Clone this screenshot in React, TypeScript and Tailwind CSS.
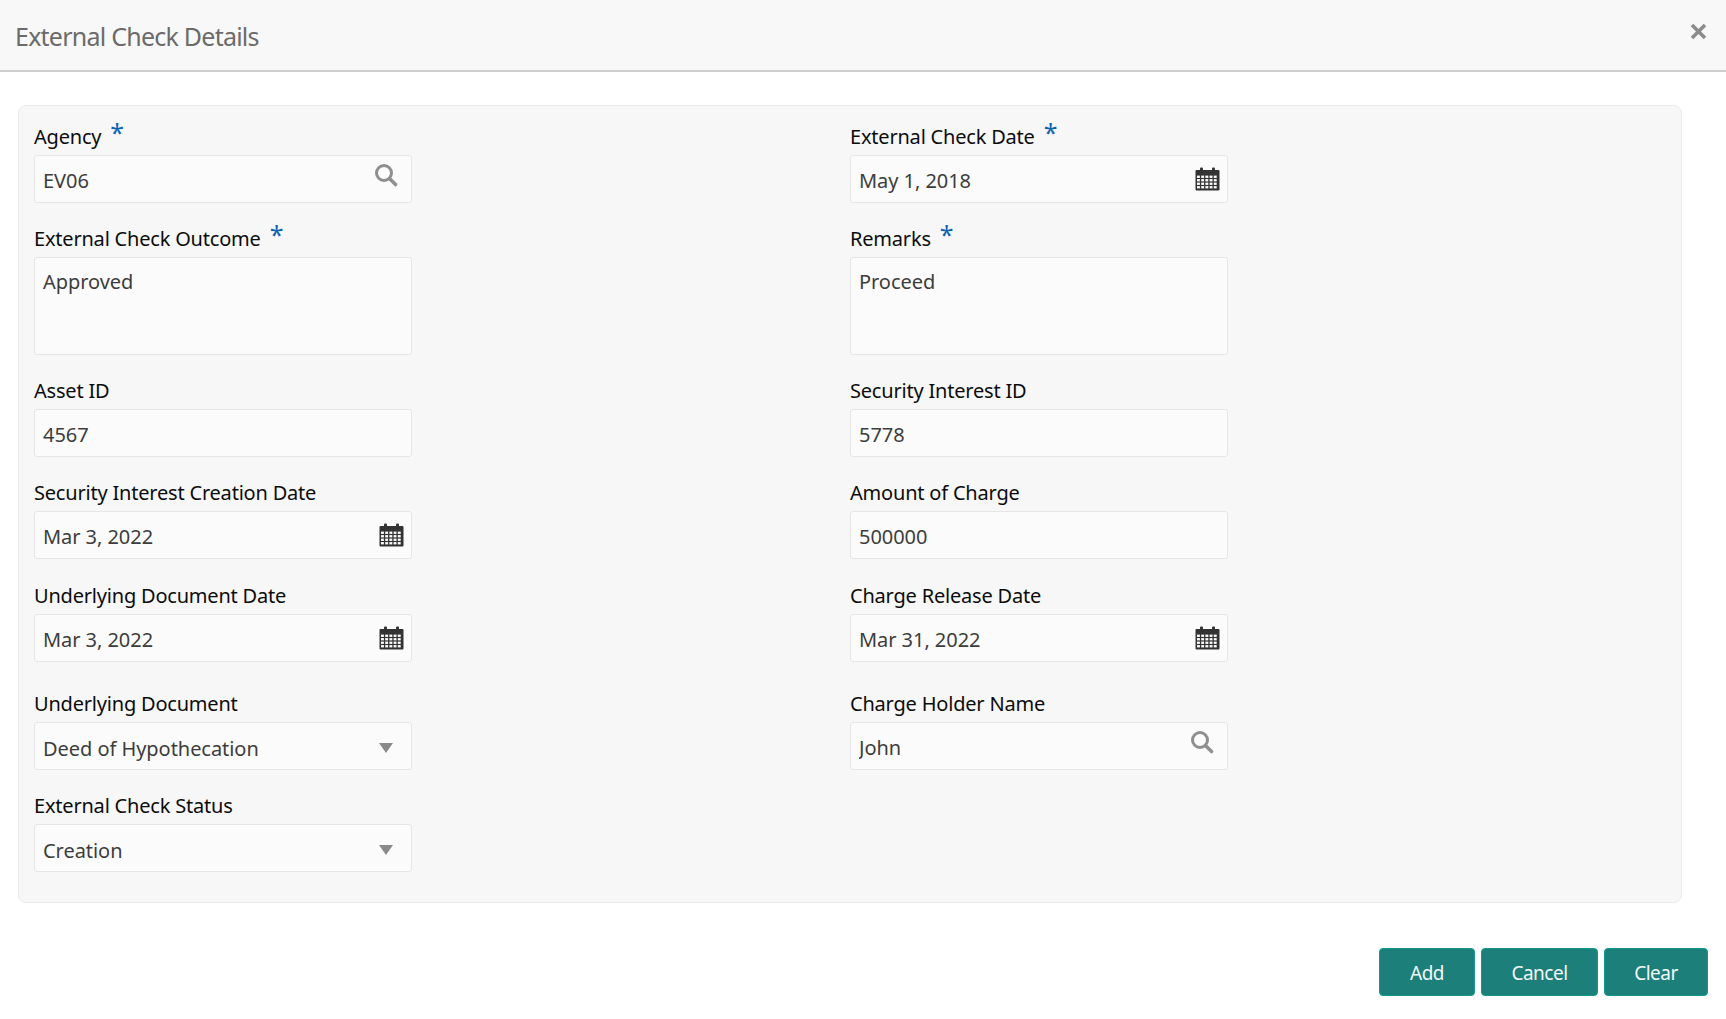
import { ReactNode } from "react";

const fontStack = "font-['Noto_Sans',sans-serif]";

function SearchIcon() {
  return (
    <svg width="24" height="24" viewBox="0 0 24 24" className="absolute right-[12px] top-[8px]" fill="none">
      <circle cx="9" cy="9" r="7.5" stroke="#8f8f8f" strokeWidth="3" />
      <path d="M15 15L20.5 20.5" stroke="#8f8f8f" strokeWidth="3.6" strokeLinecap="round" />
    </svg>
  );
}

function CalendarIcon() {
  const cells = [];
  for (let r = 0; r < 4; r++) {
    for (let c = 0; c < 5; c++) {
      cells.push(<rect key={`${r}-${c}`} x={2 + c * 4.2} y={8.6 + r * 3.5} width="2.9" height="2.3" fill="#fff" />);
    }
  }
  return (
    <svg width="25" height="24" viewBox="0 0 25 24" className="absolute right-[7px] top-[11px]">
      <rect x="0.5" y="3" width="24" height="20.5" rx="1" fill="#333333" />
      <rect x="5" y="0.5" width="3" height="5" rx="1" fill="#333333" />
      <rect x="17" y="0.5" width="3" height="5" rx="1" fill="#333333" />
      {cells}
    </svg>
  );
}

function Caret() {
  return (
    <svg width="14" height="10" viewBox="0 0 14 10" className="absolute right-[18px] top-[20px]">
      <path d="M0 0H14L7 10Z" fill="#8a8a8a" />
    </svg>
  );
}

function Field({
  label,
  required,
  className = "",
  children,
}: {
  label: string;
  required?: boolean;
  className?: string;
  children: ReactNode;
}) {
  return (
    <div className={`w-[378px] ${className}`}>
      <label className="flex h-[28px] items-start text-[20px] leading-[20px] tracking-[-0.2px] text-[#0c0c0c]">
        {label}
        {required && <span className="relative -top-[7px] ml-[9px] text-[25px] leading-none text-[#0f62b0]">*</span>}
      </label>
      {children}
    </div>
  );
}

function TextBox({ value, icon, select }: { value: string; icon?: ReactNode; select?: boolean }) {
  return (
    <div className="relative h-[48px] rounded-[3px] border border-[#e6e6e6] bg-[#fbfbfb]">
      <input
        readOnly
        value={value}
        className={`h-full w-full bg-transparent pl-[8px] pr-10 text-[20px] tracking-[-0.05px] text-[#3d3d3d] outline-none ${select ? "pt-[5px]" : "pt-[3px]"}`}
      />
      {icon}
    </div>
  );
}

function AreaBox({ value }: { value: string }) {
  return (
    <textarea
      readOnly
      value={value}
      className="block h-[98px] w-full resize-none rounded-[3px] border border-[#e6e6e6] bg-[#fbfbfb] px-[8px] pt-[10px] text-[20px] leading-[28px] tracking-[-0.05px] text-[#3d3d3d] outline-none"
    />
  );
}

function ActionButton({ label, width }: { label: string; width: string }) {
  return (
    <button className={`h-[48px] rounded-[4px] border border-[#12988e] bg-[#1c7f7a] pt-[2px] text-[19px] tracking-[-0.5px] text-[#f2f7f7] ${width}`}>
      {label}
    </button>
  );
}

export default function App() {
  return (
    <div className={`h-[1019px] w-full overflow-hidden bg-white ${fontStack}`}>
      <header className="flex h-[72px] items-center justify-between border-b-2 border-[#cfcfcf] bg-[#f8f8f8] pl-[15px] pr-[19px]">
        <h1 className="pt-[4px] text-[25px] tracking-[-0.76px] text-[#6b6b6b]">External Check Details</h1>
        <svg width="17" height="17" viewBox="0 0 17 17" className="-mt-[7px]">
          <path d="M2 2L15 15M15 2L2 15" stroke="#8c8c8c" strokeWidth="3.6" />
        </svg>
      </header>

      <div className="ml-[18px] mt-[33px] h-[798px] w-[1664px] rounded-[8px] border border-[#ebebeb] bg-[#f7f7f7] pl-[15px] pt-[21px]">
        <div className="grid grid-cols-[816px_378px] gap-y-[26px]">
          <Field label="Agency" required>
            <TextBox value="EV06" icon={<SearchIcon />} />
          </Field>
          <Field label="External Check Date" required>
            <TextBox value="May 1, 2018" icon={<CalendarIcon />} />
          </Field>
          <Field label="External Check Outcome" required>
            <AreaBox value="Approved" />
          </Field>
          <Field label="Remarks" required>
            <AreaBox value="Proceed" />
          </Field>
          <Field label="Asset ID">
            <TextBox value="4567" />
          </Field>
          <Field label="Security Interest ID">
            <TextBox value="5778" />
          </Field>
          <Field label="Security Interest Creation Date">
            <TextBox value="Mar 3, 2022" icon={<CalendarIcon />} />
          </Field>
          <Field label="Amount of Charge">
            <TextBox value="500000" />
          </Field>
          <Field label="Underlying Document Date" className="mt-[1px]">
            <TextBox value="Mar 3, 2022" icon={<CalendarIcon />} />
          </Field>
          <Field label="Charge Release Date" className="mt-[1px]">
            <TextBox value="Mar 31, 2022" icon={<CalendarIcon />} />
          </Field>
          <Field label="Underlying Document" className="mt-[6px]">
            <TextBox value="Deed of Hypothecation" icon={<Caret />} select />
          </Field>
          <Field label="Charge Holder Name" className="mt-[6px]">
            <TextBox value="John" icon={<SearchIcon />} />
          </Field>
          <Field label="External Check Status">
            <TextBox value="Creation" icon={<Caret />} select />
          </Field>
        </div>
      </div>

      <div className="mr-[18px] mt-[45px] flex justify-end gap-[6px]">
        <ActionButton label="Add" width="w-[96px]" />
        <ActionButton label="Cancel" width="w-[117px]" />
        <ActionButton label="Clear" width="w-[104px]" />
      </div>
    </div>
  );
}
